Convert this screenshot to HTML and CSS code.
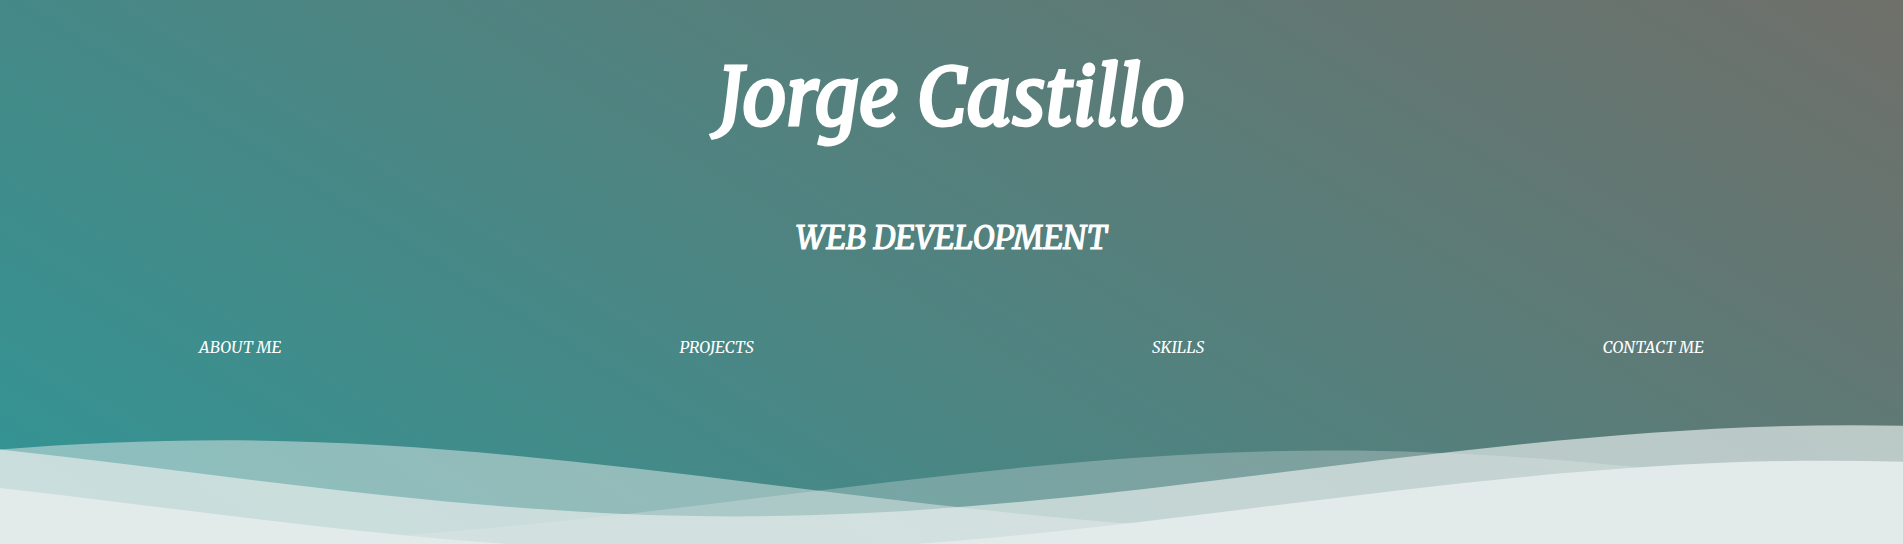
FILE: index.html
```html
<!DOCTYPE html>
<html lang="en">
<head>
<meta charset="utf-8">
<meta name="viewport" content="width=device-width, initial-scale=1">
<title>Jorge Castillo</title>
<link rel="stylesheet" href="styles.css">
</head>
<body>
<header class="header">
  <div class="intro">
    <h1 class="name">Jorge Castillo</h1>
    <h2 class="role">WEB DEVELOPMENT</h2>
  </div>
  <nav class="nav">
    <a class="nav-link" href="#about">ABOUT ME</a>
    <a class="nav-link" href="#projects">PROJECTS</a>
    <a class="nav-link" href="#skills">SKILLS</a>
    <a class="nav-link" href="#contact">CONTACT ME</a>
  </nav>
  <svg class="waves" viewBox="0 24 150 28" preserveAspectRatio="none" aria-hidden="true">
    <defs>
      <path id="wave" d="M-160 44c30 0 58-18 88-18s58 18 88 18 58-18 88-18 58 18 88 18v44h-352z"/>
    </defs>
    <use class="wave-1" href="#wave" x="42" y="0"/>
    <use class="wave-2" href="#wave" x="89.5" y="3"/>
    <use class="wave-3" href="#wave" x="1" y="5"/>
    <use class="wave-4" href="#wave" x="40" y="7"/>
  </svg>
</header>
</body>
</html>
```
FILE: styles.css
```css
body {
  margin: 0;
  overflow-x: hidden;
  overflow-y: hidden;
  background: #e3ebea;
  font-family: Merriweather, "DejaVu Serif Condensed", "DejaVu Serif", serif;
  font-style: italic;
  color: #fff;
}

.header {
  background: linear-gradient(32deg, #339494 3%, #726e68 104%);
  text-align: center;
}

.intro {
  padding-top: 47px;
}

.name {
  margin: 0;
  font-size: 79px;
  font-weight: 400;
  line-height: 100px;
  -webkit-text-stroke: 3px #fff;
}

.role {
  margin: 67px 0 0;
  font-size: 32px;
  font-weight: 400;
  line-height: 48px;
  -webkit-text-stroke: 1px #fff;
}

.nav {
  display: flex;
  justify-content: space-around;
  padding-top: 73px;
}

.nav-link {
  color: inherit;
  font-size: 16px;
  line-height: 24px;
  text-decoration: none;
}

.waves {
  display: block;
  width: 100%;
  height: 142px;
  margin-top: 56px;
}

.wave-1 {
  fill: rgba(227, 235, 234, 0.7);
}

.wave-2 {
  fill: rgba(227, 235, 234, 0.5);
}

.wave-3 {
  fill: rgba(227, 235, 234, 0.3);
}

.wave-4 {
  fill: #e3ebea;
}
```
